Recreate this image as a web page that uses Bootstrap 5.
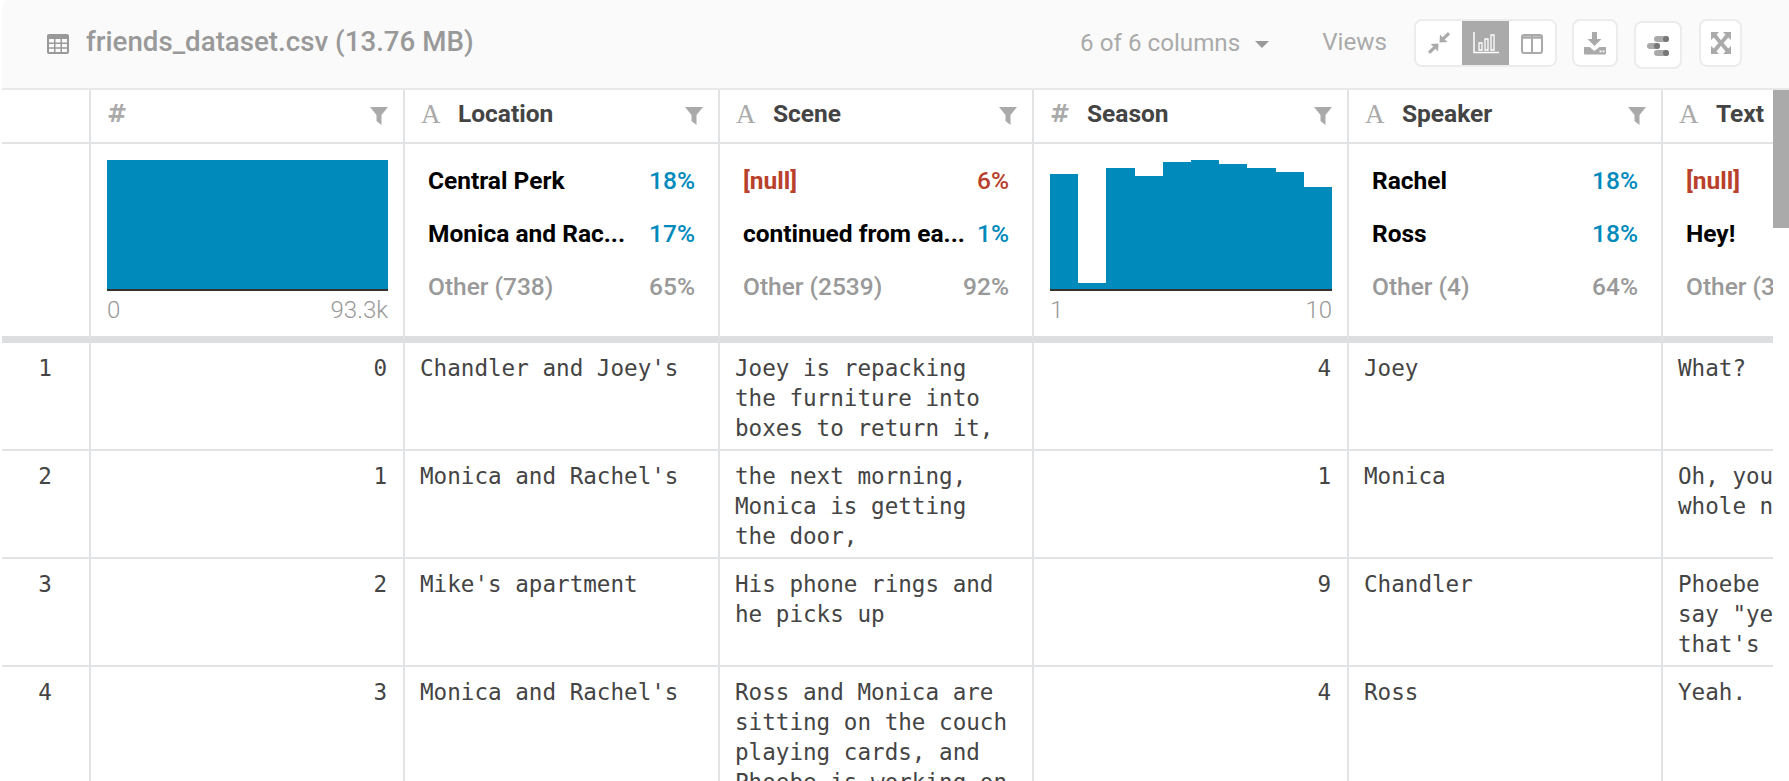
<!DOCTYPE html>
<html lang="en">
<head>
    <meta charset="UTF-8">
    <meta name="viewport" content="width=device-width, initial-scale=1.0">
    <title>friends_dataset.csv</title>
    <link href="https://cdn.jsdelivr.net/npm/bootstrap@5.3.0/dist/css/bootstrap.min.css" rel="stylesheet">
    <style>
        html, body {
            height: 100%;
            overflow: hidden;
            background: #fff;
        }
        body {
            font-family: Roboto, "Liberation Sans", sans-serif;
        }
        .viewer {
            margin-left: 2px;
            height: 781px;
        }
        .file-bar {
            height: 90px;
            background: #fafafa;
            border-bottom: 2px solid #e8e8e8;
            border-top-left-radius: 6px;
            padding-left: 45px;
            padding-right: 47px;
        }
        .file-name {
            font-size: 27.7px;
            font-weight: 500;
            color: #999;
            margin-left: 17px;
            margin-top: -4px;
        }
        .col-picker {
            font-size: 24.2px;
            color: #aaa;
            margin-left: auto;
            margin-top: -2px;
        }
        .col-caret {
            width: 0;
            height: 0;
            border-left: 7px solid transparent;
            border-right: 7px solid transparent;
            border-top: 7px solid #999;
            margin-left: 15px;
        }
        .views-label {
            font-size: 24.2px;
            color: #aaa;
            margin-left: 53px;
            margin-right: 27px;
            margin-top: -4px;
        }
        .tool-group {
            display: flex;
            height: 48px;
            border: 2px solid #ececec;
            border-radius: 8px;
            background: #fff;
            overflow: hidden;
            margin-top: -2px;
        }
        .tool-group .btn {
            width: 46px;
            padding: 0;
            border: 0;
            border-radius: 0;
            background: #fff;
        }
        .tool-group .btn.on {
            background: #aaa;
            width: 47px;
        }
        .tool-single {
            height: 48px;
            padding: 0;
            background: #fff;
            border: 2px solid #ececec;
            border-radius: 8px;
            margin-top: -2px;
        }
        .tool-dl { width: 46px; margin-left: 15px; }
        .tool-flow { width: 48px; margin-left: 16px; margin-top: 2px; }
        .tool-exp { width: 43px; margin-left: 17px; }

        .grid-clip {
            flex: 1 1 auto;
            min-width: 0;
            overflow: hidden;
        }
        .table.data-grid {
            table-layout: fixed;
            width: 1976px;
            margin: 0;
            border-collapse: separate;
            border-spacing: 0;
            color: #444;
        }
        .table.data-grid td, .table.data-grid th {
            padding: 0;
            border: 0;
            border-right: 2px solid #e2e3e5;
            box-shadow: none;
            vertical-align: top;
        }
        .head-row th {
            height: 54px;
            border-bottom: 2px solid #e2e3e5 !important;
        }
        .head-inner {
            height: 48px;
            padding: 0 15px 0 16px;
            font-size: 24.5px;
            font-weight: 700;
            color: #444;
        }
        .type-hash {
            font-family: "DejaVu Sans", sans-serif;
            font-size: 24px;
            font-weight: 700;
            color: #aaa;
            width: 37px;
        }
        .type-alpha {
            font-family: "Liberation Serif", serif;
            font-size: 27px;
            font-weight: 400;
            color: #aaa;
            width: 37px;
        }
        .funnel {
            margin-left: auto;
            margin-right: 0;
            margin-top: 4px;
        }
        .table.data-grid td.summary-cell {
            height: 199px;
            border-bottom: 7px solid #dddedf;
        }
        .hist-wrap {
            padding: 16px 15px 0 16px;
        }
        .hist-bars {
            height: 131px;
            border-bottom: 2px solid #333;
        }
        .hist-bars div {
            flex: 1 1 0;
            background: #008abc;
        }
        .hist-range {
            font-size: 24px;
            font-weight: 300;
            line-height: 30px;
            margin-top: 4px;
            color: #999;
        }
        .cat-list {
            padding: 10px 23px 0;
            font-size: 24.5px;
            font-weight: 700;
            line-height: 53px;
            white-space: nowrap;
        }
        .cat-label { color: #000; }
        .cat-pct { margin-left: auto; color: #008abc; font-weight: 500; }
        .is-null, .is-null .cat-pct { color: #b9412c; }
        .is-other .cat-label, .is-other .cat-pct { color: #999; font-weight: 500; }

        .table.data-grid .body-row td {
            font-family: "DejaVu Sans Mono", "Liberation Mono", monospace;
            font-size: 22.6px;
            line-height: 30px;
            color: #444;
            padding: 10px 16px 6px 15px;
            border-bottom: 2px solid #e2e3e5;
            letter-spacing: 0;
        }
        .scroll-rail {
            flex: 0 0 16px;
            background: #fff;
        }
        .scroll-thumb {
            height: 138px;
            background: #aaa;
        }
    </style>
</head>
<body>
    <div class="viewer d-flex flex-column">
        <!-- File bar -->
        <div class="file-bar d-flex align-items-center flex-shrink-0">
            <svg width="22" height="20" viewBox="0 0 22 20"><path fill="#999" fill-rule="evenodd" d="M2 0h18a2 2 0 0 1 2 2v16a2 2 0 0 1-2 2H2a2 2 0 0 1-2-2V2a2 2 0 0 1 2-2zM2 5v3.500h5V5zm6.500 0v3.500h5V5zM15 5v3.500h5V5zM2 10v3.200h5V10zm6.500 0v3.200h5V10zM15 10v3.200h5V10zM2 14.700V18h5v-3.300zm6.500 0V18h5v-3.300zm6.500 0V18h5v-3.300z"/></svg>
            <span class="file-name">friends_dataset.csv (13.76 MB)</span>
            <span class="col-picker">6 of 6 columns</span>
            <span class="col-caret"></span>
            <span class="views-label">Views</span>
            <div class="tool-group" role="group">
                <button class="btn" type="button">
                    <svg width="24" height="24" viewBox="0 0 24 24" fill="#aaa"><path d="M23 3.500 21 1l-5.500 5.200L13 3.500 12.500 11.500 20.500 11 17.700 8.500z"/><path d="M1 20.500 3 23l5.500-5.200 2.500 2.700.5-8-8 .5 2.800 2.500z"/></svg>
                </button>
                <button class="btn on" type="button">
                    <svg width="28" height="24" viewBox="0 0 28 24" fill="none" stroke="#fff" stroke-width="1.500"><path d="M2 1v20.500h25"/><path d="M7 12h3v7H7zM13 8h3v11h-3zM19 4h3v15h-3z" stroke-width="1.300"/></svg>
                </button>
                <button class="btn" type="button">
                    <svg width="24" height="22" viewBox="0 0 24 22" fill="none" stroke="#aaa" stroke-width="2"><rect x="2" y="2" width="20" height="18" rx="2"/><path d="M12 2v18"/><path d="M2 4.500h20" stroke-width="2.500"/></svg>
                </button>
            </div>
            <button class="tool-single tool-dl" type="button">
                <svg width="24" height="24" viewBox="0 0 24 24"><path fill="#aaa" fill-rule="evenodd" d="M9 1h5v7h4.500L11.500 15 4.500 8H9zM1 16h5.500l5 4 5-4H23v6.500a1 1 0 0 1-1 1H2a1 1 0 0 1-1-1zM16.500 19.500v1.800h2v-1.800zm3 0v1.800h2v-1.800z"/></svg>
            </button>
            <button class="tool-single tool-flow" type="button">
                <svg width="24" height="22" viewBox="0 0 24 22"><rect x="8" y="1" width="15" height="6" rx="3" fill="#aaa"/><rect x="17" y="1" width="6" height="6" rx="3" fill="#777"/><rect x="1" y="8" width="13" height="6" rx="3" fill="#aaa"/><rect x="8" y="8" width="6" height="6" rx="3" fill="#777"/><rect x="8" y="15" width="15" height="6" rx="3" fill="#aaa"/><rect x="17" y="15" width="6" height="6" rx="3" fill="#777"/></svg>
            </button>
            <button class="tool-single tool-exp" type="button">
                <svg width="22" height="24" viewBox="0 0 22 24" fill="#aaa"><path d="M1 1h8L6.500 3.600 11 9.200l4.500-5.600L13 1h8v8l-2.700-2.500L13.500 12l4.800 5.500L21 15v8h-8l2.500-2.600L11 14.800l-4.500 5.600L9 23H1v-8l2.700 2.500L8.500 12 3.700 6.500 1 9z"/></svg>
            </button>
        </div>

        <div class="d-flex flex-grow-1 overflow-hidden">
            <div class="grid-clip">
                <table class="table data-grid">
                    <colgroup>
                        <col style="width:89px"><col style="width:314px"><col style="width:315px"><col style="width:314px"><col style="width:315px"><col style="width:314px"><col style="width:315px">
                    </colgroup>
                    <thead>
                        <tr class="head-row" id="headRow"></tr>
                    </thead>
                    <tbody id="gridBody"></tbody>
                </table>
            </div>
            <div class="scroll-rail"><div class="scroll-thumb"></div></div>
        </div>
    </div>

    <script src="https://cdn.jsdelivr.net/npm/bootstrap@5.3.0/dist/js/bootstrap.bundle.min.js"></script>
    <script>
        const funnel = '<svg class="funnel" width="18" height="18" viewBox="0 0 18 18"><path fill="#aaa" d="M0 0h18l-6.500 8v10l-5-4V8z"/></svg>';

        const columns = [
            { type: '#', name: '' },
            { type: 'A', name: 'Location' },
            { type: 'A', name: 'Scene' },
            { type: '#', name: 'Season' },
            { type: 'A', name: 'Speaker' },
            { type: 'A', name: 'Text' }
        ];

        // Header row
        let head = '<th></th>';
        columns.forEach(c => {
            const cls = c.type === '#' ? 'type-hash' : 'type-alpha';
            head += `<th><div class="head-inner d-flex align-items-center"><span class="${cls}">${c.type}</span><span>${c.name}</span>${c.name === 'Text' ? '' : funnel}</div></th>`;
        });
        document.getElementById('headRow').innerHTML = head;

        function histogram(heights, from, to) {
            const bars = heights.map(h => `<div style="height:${h}px"></div>`).join('');
            return `<td class="summary-cell"><div class="hist-wrap"><div class="hist-bars d-flex align-items-end">${bars}</div><div class="hist-range d-flex justify-content-between"><span>${from}</span><span>${to}</span></div></div></td>`;
        }

        function categories(rows) {
            const items = rows.map(r => `<div class="d-flex ${r[2] || ''}"><span class="cat-label">${r[0]}</span><span class="cat-pct">${r[1]}</span></div>`).join('');
            return `<td class="summary-cell"><div class="cat-list">${items}</div></td>`;
        }

        const summary = '<tr><td class="summary-cell"></td>'
            + histogram([129], '0', '93.3k')
            + categories([['Central Perk', '18%'], ['Monica and Rac...', '17%'], ['Other (738)', '65%', 'is-other']])
            + categories([['<span class="is-null">[null]</span>', '6%', 'is-null'], ['continued from ea...', '1%'], ['Other (2539)', '92%', 'is-other']])
            + histogram([115, 6, 121, 113, 127, 129, 125, 121, 117, 102], '1', '10')
            + categories([['Rachel', '18%'], ['Ross', '18%'], ['Other (4)', '64%', 'is-other']])
            + categories([['<span class="is-null">[null]</span>', '', 'is-null'], ['Hey!', ''], ['Other (3', '', 'is-other']])
            + '</tr>';

        const rows = [
            [1, 0, "Chandler and Joey's", 'Joey is repacking the furniture into boxes to return it,', 4, 'Joey', 'What?'],
            [2, 1, "Monica and Rachel's", 'the next morning, Monica is getting the door,', 1, 'Monica', "Oh, you're making a whole new thing"],
            [3, 2, "Mike's apartment", 'His phone rings and he picks up', 9, 'Chandler', 'Phoebe and Joey all say "yes" to him and that\'s it.'],
            [4, 3, "Monica and Rachel's", 'Ross and Monica are sitting on the couch playing cards, and Phoebe is working on a crossword', 4, 'Ross', 'Yeah.']
        ];

        let body = summary;
        rows.forEach(r => {
            body += `<tr class="body-row">
                <td class="text-center">${r[0]}</td>
                <td class="text-end">${r[1]}</td>
                <td>${r[2]}</td>
                <td>${r[3]}</td>
                <td class="text-end">${r[4]}</td>
                <td>${r[5]}</td>
                <td>${r[6]}</td>
            </tr>`;
        });
        document.getElementById('gridBody').innerHTML = body;
    </script>
</body>
</html>
